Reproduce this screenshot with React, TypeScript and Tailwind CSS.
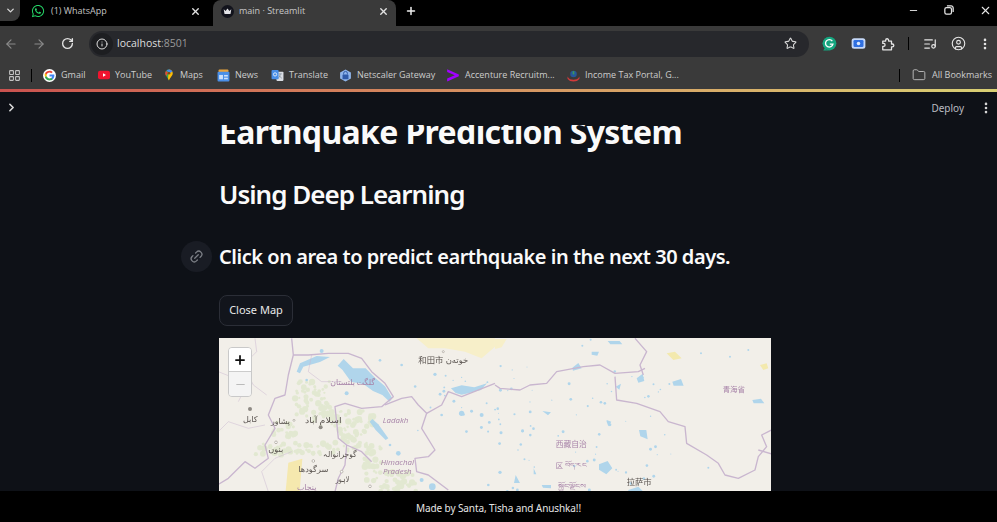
import { ArrowLeft, ArrowRight, ChevronDown, ChevronRight, CircleUser, EllipsisVertical, Folder, Info, LayoutGrid, Link2, ListMusic, Minus, Plus, RotateCw, Star, X } from "lucide-react";
import { FaWhatsapp } from "react-icons/fa";

const ui = { fontFamily: '"Open Sans", "Noto Sans", sans-serif' };
const heading = { fontFamily: '"Noto Sans", "Open Sans", sans-serif' };
const mapCjk = '"Noto Sans CJK SC", "DejaVu Sans", sans-serif';

function GoogleIcon() {
  return (
    <svg viewBox="0 0 24 24" className="w-[13px] h-[13px] shrink-0">
      <circle cx="12" cy="12" r="12" fill="#fff" />
      <path d="M21 12.2c0-.7-.1-1.300-.2-1.900H12v3.600h5c-.2 1.100-.9 2.100-1.900 2.700v2.300h3c1.800-1.600 2.900-3.900 2.900-6.700z" fill="#4285f4" />
      <path d="M12 21c2.500 0 4.600-.8 6.100-2.200l-3-2.300c-.8.6-1.900.9-3.100.9-2.400 0-4.400-1.600-5.100-3.800H3.800v2.400C5.300 19 8.400 21 12 21z" fill="#34a853" />
      <path d="M6.900 13.600c-.4-1.100-.4-2.200 0-3.300V7.900H3.800c-1 2-1 4.300 0 6.200z" fill="#fbbc05" />
      <path d="M12 6.600c1.300 0 2.500.5 3.400 1.400l2.600-2.600C16.400 3.900 14.300 3 12 3 8.400 3 5.300 5 3.800 7.900l3.100 2.400C7.600 8.200 9.600 6.600 12 6.600z" fill="#ea4335" />
    </svg>
  );
}

function YoutubeIcon() {
  return (
    <svg viewBox="0 0 24 24" className="w-[12px] h-[12px] shrink-0">
      <rect x="0" y="3.500" width="24" height="17" rx="4" fill="#f0142f" />
      <path d="M10 8.500v7l6-3.500z" fill="#fff" />
    </svg>
  );
}

function MapsIcon() {
  return (
    <svg viewBox="0 0 24 24" className="w-[12px] h-[12px] shrink-0">
      <path d="M12 1C7.500 1 4.500 4.500 4.500 8.500c0 2 .8 3.600 2 5.300L12 23z" fill="#34a853" />
      <path d="M12 1c4.500 0 7.500 3.500 7.500 7.500 0 5-5 8-7.500 14.500l-2-4z" fill="#fbbc05" />
      <path d="M6 4l4 3-3.500 6.800C5 12 4.500 10 4.500 8.500 4.500 7 5 5.400 6 4z" fill="#ea4335" />
      <path d="M7 3c1.300-1.300 3-2 5-2 3 0 5.500 1.600 6.700 4L14 8z" fill="#4285f4" />
      <circle cx="12" cy="8.500" r="2.600" fill="#7a4a12" />
    </svg>
  );
}

function NewsIcon() {
  return (
    <svg viewBox="0 0 24 24" className="w-[13px] h-[13px] shrink-0">
      <rect x="3" y="1" width="18" height="8" rx="1.500" fill="#e8a33d" />
      <rect x="1" y="5" width="22" height="18" rx="2" fill="#4a8fe7" />
      <rect x="4" y="11" width="7" height="8" fill="#cfe1fa" />
      <rect x="13" y="11" width="7" height="3" fill="#cfe1fa" />
      <rect x="13" y="16" width="7" height="3" fill="#cfe1fa" />
    </svg>
  );
}

function TranslateIcon() {
  return (
    <svg viewBox="0 0 24 24" className="w-[13px] h-[13px] shrink-0">
      <rect x="10" y="5" width="13" height="17" rx="1.500" fill="#d9dde3" />
      <path d="M14 9h6M17 9c0 4-2 7-4 8M15 12c1 2 3 4 5 5" stroke="#7b8794" strokeWidth="1.300" fill="none" />
      <rect x="1" y="2" width="13" height="17" rx="1.500" fill="#4a8fe7" />
      <circle cx="7.500" cy="10" r="3" fill="none" stroke="#fff" strokeWidth="1.400" />
    </svg>
  );
}

function NetscalerIcon() {
  return (
    <svg viewBox="0 0 24 24" className="w-[13px] h-[13px] shrink-0">
      <path d="M12 1l10 5.500v11L12 23 2 17.500v-11z" fill="#8fb4ea" />
      <rect x="6.500" y="10" width="11" height="9" rx="1" fill="#2f5aa8" />
      <path d="M8.500 10V8a3.500 3.500 0 017 0v2" fill="none" stroke="#2f5aa8" strokeWidth="1.800" />
    </svg>
  );
}

function AccentureIcon() {
  return (
    <svg viewBox="0 0 24 24" className="w-[14px] h-[14px] shrink-0">
      <path d="M2 2l20 9v3L2 23v-5l13-5.500L2 7z" fill="#a100ff" />
    </svg>
  );
}

function IncomeTaxIcon() {
  return (
    <svg viewBox="0 0 24 24" className="w-[13px] h-[13px] shrink-0">
      <circle cx="12" cy="9" r="6" fill="#27579c" />
      <path d="M10.500 4h3v6h-3z" fill="#3c9a5a" />
      <path d="M1 14c3 5 6 6 11 6s8-1 11-6v4c-3 4-6 5-11 5S4 22 1 18z" fill="#d23a3a" />
    </svg>
  );
}

function GrammarlyIcon() {
  return (
    <svg viewBox="0 0 24 24" className="w-[15px] h-[15px]">
      <path d="M12 1a11 11 0 100 22H2l2.500-4A11 11 0 0112 1z" fill="#15a57f" />
      <circle cx="12" cy="12" r="11" fill="#15a57f" />
      <path d="M16.500 8.200A6 6 0 1017.500 13h-5" fill="none" stroke="#fff" strokeWidth="2.200" />
    </svg>
  );
}

function CameraExtIcon() {
  return (
    <svg viewBox="0 0 24 24" className="w-[15px] h-[15px]">
      <rect x="1" y="3.500" width="22" height="17" rx="4" fill="#c5d8f8" />
      <rect x="4" y="6.500" width="16" height="11" rx="2" fill="#2f6fe0" />
      <circle cx="12" cy="12" r="2.800" fill="#dbe7fb" />
    </svg>
  );
}

function ExtensionsIcon() {
  return (
    <svg viewBox="0 0 24 24" className="w-[14px] h-[14px] ml-[15px]" fill="none" stroke="#e6e6e6" strokeWidth="2.200" strokeLinejoin="round">
      <path d="M3 7h5V5.500a2.500 2.500 0 015 0V7h5v5h1.500a2.500 2.500 0 010 5H18v5H3v-6h1.500a2.500 2.500 0 000-5H3z" />
    </svg>
  );
}

function CrownIcon() {
  return (
    <svg viewBox="0 0 24 24" className="w-[13px] h-[13px] shrink-0">
      <circle cx="12" cy="12" r="12" fill="#12131c" />
      <path d="M5 8l3.500 3L12 6.500 15.500 11 19 8l-1.500 8.500h-11z" fill="#e4e4e8" />
    </svg>
  );
}

const bookmarks = [
  { label: "Gmail", icon: <GoogleIcon />, w: "w-[55px]" },
  { label: "YouTube", icon: <YoutubeIcon />, w: "w-[65px]" },
  { label: "Maps", icon: <MapsIcon />, w: "w-[54px]" },
  { label: "News", icon: <NewsIcon />, w: "w-[54px]" },
  { label: "Translate", icon: <TranslateIcon />, w: "w-[68px]" },
  { label: "Netscaler Gateway", icon: <NetscalerIcon />, w: "w-[107px]" },
  { label: "Accenture Recruitm...", icon: <AccentureIcon />, w: "w-[121px]" },
  { label: "Income Tax Portal, G...", icon: <IncomeTaxIcon />, w: "w-[125px]" },
];

function TabStrip() {
  return (
    <div className="h-[26px] bg-black flex items-start shrink-0">
      <div className="w-[20px] h-[21px] bg-[#3a3a3a] rounded-br-lg flex items-center justify-center">
        <ChevronDown size={11} strokeWidth={3} className="text-[#d5d5d5]" />
      </div>
      <div className="w-[193px] h-[26px] flex items-center pl-[11px] pr-[12px] pb-[4px]">
        <FaWhatsapp size={14} className="text-[#25d366] shrink-0" />
        <span className="ml-[6px] text-[9px] text-[#c4c4c4] flex-1">(1) WhatsApp</span>
        <X size={11} strokeWidth={3} className="text-[#e2e2e2]" />
      </div>
      <div className="w-[183px] h-[26px] bg-[#3a3a3a] rounded-t-lg flex items-center pl-[8px] pr-[7px] pb-[4px]">
        <CrownIcon />
        <span className="ml-[5px] text-[9px] text-[#c8c8c8] flex-1">main · Streamlit</span>
        <X size={11} strokeWidth={3} className="text-[#e2e2e2]" />
      </div>
      <div className="ml-[9px] h-[21px] flex items-center">
        <Plus size={12} strokeWidth={3} className="text-[#efefef]" />
      </div>
      <div className="ml-auto h-[20px] flex items-center text-[#e6e6e6]">
        <Minus size={11} strokeWidth={2} />
        <svg viewBox="0 0 12 12" className="w-[10px] h-[10px] ml-[25px]" fill="none" stroke="currentColor" strokeWidth="1.500">
          <rect x="1" y="3" width="8" height="8" rx="2" />
          <path d="M3.500 1h5a2.500 2.500 0 012.500 2.500v5" />
        </svg>
        <X size={13} strokeWidth={2} className="ml-[25px] mr-[5px]" />
      </div>
    </div>
  );
}

function Toolbar() {
  return (
    <div className="h-[35px] bg-[#3a3a3a] flex items-center shrink-0">
      <ArrowLeft size={14} className="ml-[4px] text-[#8a8a8a]" />
      <ArrowRight size={14} className="ml-[14px] text-[#8a8a8a]" />
      <RotateCw size={13} strokeWidth={2.500} className="ml-[15px] text-[#e2e2e2]" />
      <div className="ml-[15px] w-[720px] h-[26px] bg-[#27282c] rounded-full flex items-center pl-[2px] pr-[12px]">
        <div className="w-[22px] h-[22px] rounded-full bg-[#1d1e21] flex items-center justify-center">
          <Info size={12} className="text-[#e0e0e0]" />
        </div>
        <span className="ml-[4px] text-[10.500px] text-[#dedede]">localhost<span className="text-[#9a9a9a]">:8501</span></span>
        <Star size={13} strokeWidth={2} className="ml-auto text-[#d8d8d8]" />
      </div>
      <div className="ml-[13px]"><GrammarlyIcon /></div>
      <div className="ml-[14px]"><CameraExtIcon /></div>
      <ExtensionsIcon />
      <div className="ml-[13px] w-[1px] h-[13px] bg-black" />
      <ListMusic size={14} strokeWidth={2} className="ml-[14px] text-[#e6e6e6]" />
      <CircleUser size={15} strokeWidth={1.800} className="ml-[14px] text-[#e6e6e6]" />
      <EllipsisVertical size={14} strokeWidth={2.500} className="ml-[12px] text-[#e6e6e6]" />
    </div>
  );
}

function BookmarksBar() {
  return (
    <div className="h-[28px] bg-[#3a3a3a] flex items-center shrink-0">
      <LayoutGrid size={13} strokeWidth={2} className="ml-[8px] text-[#c2c2c2]" />
      <div className="ml-[10px] w-[1px] h-[13px] bg-black mr-[11px]" />
      {bookmarks.map((b) => (
        <div key={b.label} className={`flex items-center gap-[5px] ${b.w}`}>
          {b.icon}
          <span className="text-[9px] text-[#cdcdcd] whitespace-nowrap">{b.label}</span>
        </div>
      ))}
      <div className="ml-auto w-[1px] h-[13px] bg-black" />
      <Folder size={14} strokeWidth={1.600} className="ml-[12px] text-[#bdbdbd]" />
      <span className="ml-[6px] mr-[5px] text-[9px] text-[#cdcdcd] whitespace-nowrap">All Bookmarks</span>
    </div>
  );
}

// small ponds and patches scattered over the map, fixed seed so the picture never changes
function specks(count: number, seed: number, w: number, h: number) {
  const out: { x: number; y: number; r: number }[] = [];
  let s = seed;
  const next = () => {
    s = (s * 16807) % 2147483647;
    return s / 2147483647;
  };
  for (let i = 0; i < count; i++) {
    out.push({ x: next() * w, y: next() * h, r: 1.5 + next() * 3 });
  }
  return out;
}

const forests = [
  { x: 235, y: 135, w: 115, h: 110, n: 55, seed: 11 },
  { x: 280, y: 235, w: 90, h: 40, n: 18, seed: 23 },
  { x: 370, y: 225, w: 105, h: 130, n: 60, seed: 37 },
  { x: 445, y: 330, w: 55, h: 110, n: 30, seed: 41 },
  { x: 120, y: 325, w: 110, h: 35, n: 22, seed: 53 },
  { x: 240, y: 320, w: 130, h: 40, n: 28, seed: 67 },
  { x: 490, y: 410, w: 130, h: 60, n: 36, seed: 71 },
  { x: 175, y: 260, w: 70, h: 50, n: 20, seed: 83 },
];

function Label(props: { x: number; y: number; len: number; size?: number; italic?: boolean; children: string }) {
  return (
    <text
      x={props.x}
      y={props.y}
      textLength={props.len}
      lengthAdjust="spacingAndGlyphs"
      fontSize={props.size ?? 24}
      fontStyle={props.italic ? "italic" : undefined}
      fontFamily={props.italic ? "Open Sans" : undefined}
    >
      {props.children}
    </text>
  );
}

function MapArt() {
  const border = "#c9b6cf";
  const water = "#a9d3ec";
  return (
    <svg viewBox="219 338 552 153" className="absolute inset-0 w-full h-full blur-[0.5px]">
      <rect x="219" y="338" width="552" height="153" fill="#f2efe9" />
      {/* left half, coordinates read off the crop */}
      <g transform="translate(215 335) scale(0.3333)">
        <path d="M605 10h235v25l-40 35-50-20-60-10-50 0z" fill="#f7efc9" />
        <g fill="#d6e4bf" opacity="0.55">
          {forests.map((f) =>
            specks(f.n, f.seed * 1009, f.w, f.h).map((p, i) => (
              <circle key={`${f.seed}-${i}`} cx={f.x + p.x} cy={f.y + p.y} r={p.r * 2.2} />
            ))
          )}
        </g>
        <path d="M212 468l8-85 42-12-8 97z" fill="#f5e8ae" />
        <g fill={water} opacity="0.9">
          <path d="M245 110l10-25 50-22 40 3-30 15-50 14-10 20z" />
          <path d="M368 92l18-20 28 28 38 0 28 28 30 26 22 36-8 10-22-20-28-12-28-20-38-8-26-36z" />
          <path d="M472 252l18 16 30 42-8 5-30-30-18-25z" />
          <path d="M708 160l32-9 38 6 38-12-18 20-38 10-20 4-18-5z" />
          <circle cx="320" cy="48" r="6" />
          <circle cx="495" cy="76" r="4" />
          <circle cx="560" cy="90" r="4" />
          <circle cx="660" cy="118" r="5" />
          <circle cx="692" cy="122" r="3" />
          <circle cx="740" cy="235" r="8" />
          <circle cx="800" cy="240" r="6" />
          <circle cx="550" cy="355" r="7" />
          <circle cx="620" cy="435" r="6" />
          <circle cx="652" cy="455" r="10" />
          <circle cx="820" cy="450" r="4" />
          <circle cx="815" cy="205" r="3" />
          <circle cx="680" cy="240" r="4" />
          <circle cx="275" cy="135" r="4" />
          <circle cx="395" cy="175" r="6" />
          <circle cx="525" cy="330" r="4" />
          {specks(26, 4242, 260, 200).map((p, i) => (
            <circle key={i} cx={600 + p.x} cy={90 + p.y} r={p.r} />
          ))}
        </g>
        <g fill="none" stroke={border} strokeWidth="4" strokeLinejoin="round">
          <path d="M230 10l5 50-15 60-10 60-30 10-20 50 20 40-30 50 10 40-40 30-30-20-50 50-50 30" />
          <path d="M235 60l45 0 60-5 60 0 40 15 30 40 40 35 25 40-35 30-60 5-50-15-30 10 5 45 5 50 25 20 45 20 30 30" />
          <path d="M510 210l50-20 30-5 20 25 25 25-15 45 40 65-20 20-40 5 5 40 35 10 60 45" />
          <path d="M635 235l45-25 20-40 40 15 100-40" />
          <path d="M395 330l-5 60-20 40-10 40" />
          <path d="M120 10l5 40-40 40 30 60 40 30M10 110l50 20 30 30-20 40" strokeWidth="2" opacity="0.7" />
          <path d="M150 270l-50 10-60-20-30 30M230 350l-50 20-40 40 20 60M290 60l-10 50 40 30 60 0" strokeWidth="2" opacity="0.7" />
        </g>
        <g fill="#fff" stroke="#b9b4ac" strokeWidth="3">
          <circle cx="685" cy="50" r="3" />
          <circle cx="237" cy="256" r="3" />
          <circle cx="183" cy="322" r="4" />
          <circle cx="295" cy="378" r="4" />
          <circle cx="380" cy="410" r="4" />
          <circle cx="465" cy="454" r="4" />
        </g>
        <circle cx="105" cy="222" r="6" fill="#8e8a84" />
        <circle cx="317" cy="277" r="6" fill="#8e8a84" />
        <g fill="#5a5450" fontFamily={mapCjk}>
          <Label x={610} y={85} len={75} size={25}>和田市</Label>
          <Label x={692} y={85} len={68}>خوتەن</Label>
          <Label x={84} y={262} len={44}>کابل</Label>
          <Label x={168} y={268} len={57}>پشاور</Label>
          <Label x={270} y={263} len={110}>اسلام آباد</Label>
          <Label x={160} y={350} len={45}>بنوں</Label>
          <Label x={325} y={366} len={100}>گوجرانوالہ</Label>
          <Label x={250} y={411} len={90}>سرگودھا</Label>
          <Label x={362} y={442} len={41}>لاہور</Label>
        </g>
        <g fill="#a783a8" fontFamily={mapCjk}>
          <Label x={346} y={150} len={134}>گلگت بلتستان</Label>
          <Label x={503} y={265} len={77} size={22} italic>Ladakh</Label>
          <Label x={497} y={390} len={100} size={22} italic>Himachal</Label>
          <Label x={504} y={417} len={86} size={22} italic>Pradesh</Label>
          <Label x={246} y={464} len={58}>پنجاب</Label>
        </g>
      </g>
      {/* right half */}
      <g transform="translate(495 335) scale(0.3333)">
        <path d="M0 12h35l-15 25-20 5z" fill="#f7efc9" />
        <path d="M515 55l25-5 20 20-25 5zM795 90l20-5 5 15-15 5z" fill="#f3e9ae" />
        <g fill={water} opacity="0.9">
          <path d="M338 18l36 0 8 10-36 0zM290 50l22 0-5 12-17-3zM232 98l18-14 10 16-26 7z" />
          <path d="M362 155l16-9-5 18zM425 130l18-14 5 22-18 5zM532 140l26-8 8 20-30 0z" />
          <path d="M312 388l26-10 14 22-18 18-22-14zM432 285l22 0 4 28-22-9zM335 255l14 5-9 14-5-14z" />
          <path d="M772 195l26-4 10 14-32 0zM142 228l26 4-9 9zM140 450l28 0 0 10-24-2zM62 420l13 24-18 0zM116 400l8 18-8 0z" />
          <path d="M400 465l30-10 15 15h-45z" />
          <circle cx="287" cy="14" r="3" />
          <circle cx="262" cy="32" r="3" />
          <circle cx="15" cy="412" r="5" />
          <circle cx="705" cy="65" r="3" />
          <circle cx="760" cy="45" r="3" />
          <circle cx="618" cy="55" r="3" />
          <circle cx="640" cy="398" r="3" />
          {specks(70, 917, 520, 380).map((p, i) => (
            <circle key={i} cx={10 + p.x} cy={90 + p.y} r={p.r} />
          ))}
        </g>
        <g fill="none" stroke={border} strokeWidth="4" strokeLinejoin="round">
          <path d="M0 150l15 10 60 5 30-15 50-5 30-35 80-15 50-5 45 25 70-5 20-10" />
          <path d="M420 10l35 40-20 40 10 30" />
          <path d="M360 125l5 70 60 10 70 25 25 30 50 15 5 50 60 35 35 25 20 35 40 10 50-25 10-40 25-30-15-35 20-10 10-5" />
          <path d="M790 345l50 15" />
        </g>
        <g fill="#a783a8" fontFamily={mapCjk}>
          <Label x={683} y={170} len={67} size={22}>青海省</Label>
          <Label x={182} y={335} len={93} size={23}>西藏自治</Label>
          <Label x={182} y={398} len={22} size={22}>区</Label>
          <Label x={210} y={396} len={62} size={18}>བོད་རང</Label>
          <Label x={188} y={460} len={84} size={18}>སྐྱོང་ལྗོངས</Label>
        </g>
        <g fill="#5a5450" fontFamily={mapCjk}>
          <Label x={395} y={451} len={75} size={25}>拉萨市</Label>
        </g>
      </g>
    </svg>
  );
}

export default function App() {
  return (
    <div className="w-[997px] h-[522px] overflow-hidden flex flex-col bg-[#0e1117]" style={ui}>
      <TabStrip />
      <Toolbar />
      <BookmarksBar />
      <div className="h-[3px] shrink-0 bg-gradient-to-r from-[#c9524f] to-[#d8cf73]" />
      <div className="h-[33px] shrink-0 relative z-10 bg-[#0e1117] flex items-start pt-[9px]">
        <ChevronRight size={13} strokeWidth={3} className="ml-[5px] text-[#d8d8d8]" />
        <span className="ml-auto text-[10px] text-[#b9bcc2]" style={heading}>Deploy</span>
        <EllipsisVertical size={14} strokeWidth={2.500} className="ml-[15px] mr-[4px] text-[#d8d8d8]" />
      </div>
      <main className="flex-1 min-h-0 overflow-hidden pl-[219px] w-[771px] box-content" style={heading}>
        <div className="w-[552px]">
          <h1 className="text-[32px] leading-[40px] font-bold tracking-[-0.65px] text-[#fafafa] whitespace-nowrap mt-[-13px]">Earthquake Prediction System</h1>
          <h2 className="text-[26px] leading-[34px] font-semibold tracking-[-1px] text-[#fafafa] whitespace-nowrap mt-[25px]">Using Deep Learning</h2>
          <h3 className="relative text-[20px] leading-[28px] font-semibold tracking-[-0.46px] text-[#fafafa] whitespace-nowrap mt-[32px]">
            <span className="absolute left-[-38px] top-[-2px] w-[31px] h-[31px] rounded-full bg-[#191c24] flex items-center justify-center">
              <Link2 size={15} className="text-[#7d8087] -rotate-45" />
            </span>
            Click on area to predict earthquake in the next 30 days.
          </h3>
          <button className="mt-[24px] block w-[74px] h-[31px] rounded-lg border border-[#2b2e37] bg-[#12151c] text-[11px] text-[#e8e8e8]">Close Map</button>
          <div className="relative mt-[12px] h-[153px] overflow-hidden">
            <MapArt />
            <div className="absolute left-[9px] top-[9px] w-[24px] rounded-sm border border-[#c9c9c9] overflow-hidden">
              <div className="h-[24px] bg-white flex items-center justify-center border-b border-[#ccc]">
                <Plus size={14} strokeWidth={3} className="text-[#111]" />
              </div>
              <div className="h-[24px] bg-[#f4f4f4] flex items-center justify-center">
                <Minus size={13} strokeWidth={2} className="text-[#bbb]" />
              </div>
            </div>
          </div>
        </div>
      </main>
      <footer className="h-[31px] shrink-0 bg-black flex items-center justify-center pt-[3px] text-[10px] tracking-[-0.1px] text-[#e6e6e6]" style={heading}>
        Made by Santa, Tisha and Anushka!!
      </footer>
    </div>
  );
}
